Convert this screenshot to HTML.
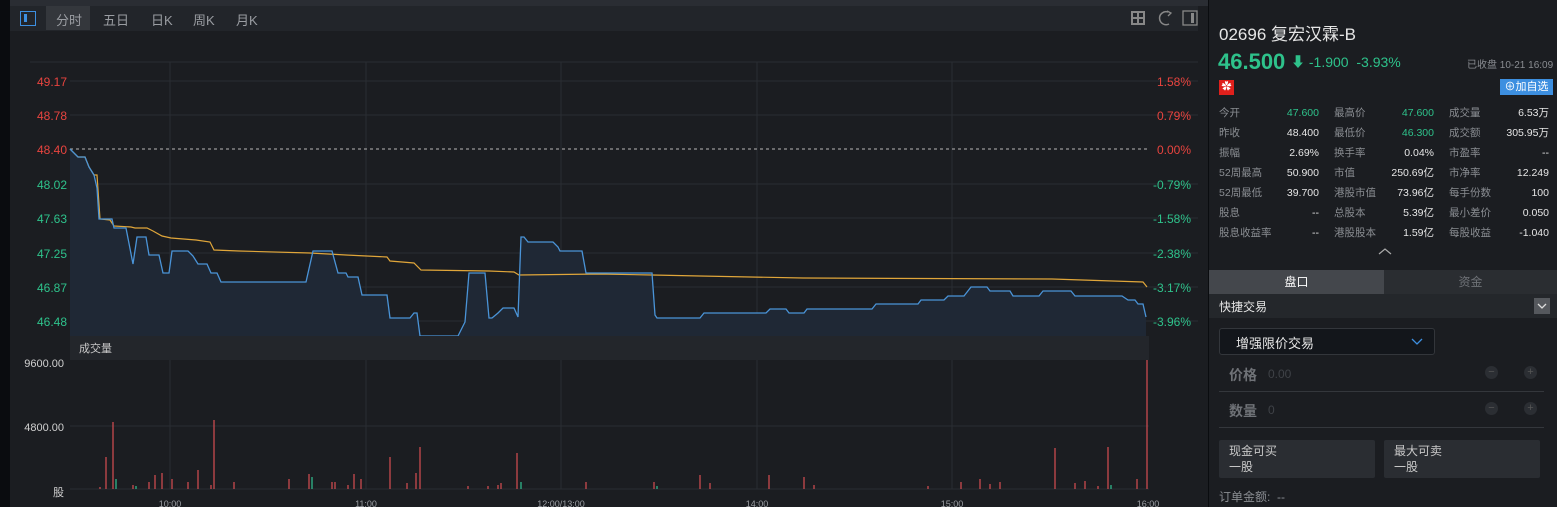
<!DOCTYPE html>
<html><head><meta charset="utf-8"><style>
*{margin:0;padding:0;box-sizing:border-box}
body{width:1557px;height:507px;background:#1b1d21;position:relative;overflow:hidden;font-family:"Liberation Sans","Noto Sans CJK SC",sans-serif;color:#ccc}
.a{position:absolute;white-space:nowrap}
.g{color:#2ec28b}.r{color:#e8443f}
.lab{color:#8a8d92;font-size:10.5px}
.val{color:#e6e6e6;font-size:10.5px;text-align:right;width:80px}
</style></head><body>
<div class="a" style="left:0;top:0;width:1208px;height:6px;background:#2a2d33"></div>
<div class="a" style="left:0;top:0;width:10px;height:507px;background:#0a0c0f"></div>
<div class="a" style="left:10px;top:6px;width:1188px;height:25px;background:#22252a"></div>
<div class="a" style="left:1208px;top:0;width:1px;height:507px;background:#0a0c0f"></div>
<!-- toolbar -->
<div class="a" style="left:20px;top:11px;width:16px;height:15px;border:1.5px solid #3d8fe0"><div style="position:absolute;left:3px;top:2px;width:3px;height:8px;background:#3d8fe0"></div></div>
<div class="a" style="left:46px;top:6px;width:44px;height:24px;background:#34373c"></div>
<div class="a" style="left:56px;top:10px;font-size:13px;color:#9a9da2">分时</div>
<div class="a" style="left:103px;top:10px;font-size:13px;color:#9a9da2">五日</div>
<div class="a" style="left:151px;top:10px;font-size:13px;color:#9a9da2">日K</div>
<div class="a" style="left:193px;top:10px;font-size:13px;color:#9a9da2">周K</div>
<div class="a" style="left:236px;top:10px;font-size:13px;color:#9a9da2">月K</div>
<svg class="a" style="left:1128px;top:9px" width="80" height="18">
<rect x="3" y="2" width="14" height="14" fill="#888"/><rect x="5" y="4" width="4" height="4" fill="#22252a"/><rect x="11" y="4" width="4" height="4" fill="#22252a"/><rect x="5" y="10" width="4" height="4" fill="#22252a"/><rect x="11" y="10" width="4" height="4" fill="#22252a"/>
<path d="M40 3 A6.5 6.5 0 1 0 41 15" fill="none" stroke="#888" stroke-width="1.5"/><path d="M39 2 L43 4 L40 7" fill="none" stroke="#888" stroke-width="1.3"/>
<rect x="55" y="2" width="14" height="14" fill="none" stroke="#888" stroke-width="1.3"/><rect x="63" y="4" width="3" height="10" fill="#888"/>
</svg>
<!-- chart -->
<svg class="a" style="left:0;top:0" width="1208" height="507" font-family="Liberation Sans, sans-serif" font-size="12">
<g stroke="#2a2d32" stroke-width="1">
<line x1="30" y1="62" x2="1198" y2="62"/>
<line x1="70" y1="81" x2="1198" y2="81"/><line x1="70" y1="115" x2="1198" y2="115"/><line x1="70" y1="184" x2="1198" y2="184"/><line x1="70" y1="218" x2="1198" y2="218"/><line x1="70" y1="253" x2="1198" y2="253"/><line x1="70" y1="287" x2="1198" y2="287"/><line x1="70" y1="321" x2="1198" y2="321"/>
<line x1="170" y1="62" x2="170" y2="336"/><line x1="366" y1="62" x2="366" y2="336"/><line x1="561" y1="62" x2="561" y2="336"/><line x1="757" y1="62" x2="757" y2="336"/><line x1="952" y1="62" x2="952" y2="336"/>
<line x1="70" y1="426" x2="1149" y2="426"/><line x1="70" y1="489" x2="1149" y2="489"/>
<line x1="170" y1="360" x2="170" y2="489"/><line x1="366" y1="360" x2="366" y2="489"/><line x1="561" y1="360" x2="561" y2="489"/><line x1="757" y1="360" x2="757" y2="489"/><line x1="952" y1="360" x2="952" y2="489"/>
</g>
<line x1="70" y1="149" x2="1150" y2="149" stroke="#999" stroke-width="1.3" stroke-dasharray="3,3"/>
<g text-anchor="end" fill="#e8443f"><text x="67" y="86">49.17</text><text x="67" y="120">48.78</text><text x="67" y="154">48.40</text></g>
<g text-anchor="end" fill="#2ec28b"><text x="67" y="189">48.02</text><text x="67" y="223">47.63</text><text x="67" y="258">47.25</text><text x="67" y="292">46.87</text><text x="67" y="326">46.48</text></g>
<g fill="#e8443f"><text x="1157" y="86">1.58%</text><text x="1157" y="120">0.79%</text><text x="1157" y="154">0.00%</text></g>
<g fill="#2ec28b"><text x="1153" y="189">-0.79%</text><text x="1153" y="223">-1.58%</text><text x="1153" y="258">-2.38%</text><text x="1153" y="292">-3.17%</text><text x="1153" y="326">-3.96%</text></g>
<path d="M70 149 L78 157 L85 157 L89 167 L94 175 L97 188 L99 219 L112 219 L114 228 L126 228 L133 264 L137 237 L146 237 L149 255 L159 255 L163 273 L169 273 L172 251 L188 251 L193 256 L198 264 L207 264 L211 273 L217 273 L221 282 L306 282 L313 251 L332 251 L338 273 L346 273 L348 277 L358 277 L362 295 L387 295 L390 318 L410 318 L414 313 L417 313 L420 336 L458 336 L465 322 L469 273 L485 273 L489 318 L492 318 L498 313 L503 308 L514 308 L518 317 L521 237 L524 237 L528 242 L553 242 L558 247 L560 251 L582 251 L586 273 L652 273 L655 315 L657 318 L700 318 L704 313 L766 313 L770 309 L786 309 L789 313 L804 313 L807 309 L872 309 L876 304 L918 304 L921 300 L944 300 L948 296 L964 296 L971 287 L987 287 L990 291 L1010 291 L1013 296 L1039 296 L1043 291 L1071 291 L1075 296 L1122 296 L1128 300 L1135 300 L1138 304 L1143 304 L1146 317 L1146 336 L70 336 Z" fill="#1f2835"/>
<path d="M70 149 L78 157 L85 157 L89 167 L94 175 L97 175 L100 219 L110 220 L114 226 L131 227 L135 228 L147 228 L153 231 L162 236 L171 238 L196 240 L210 242 L214 250 L239 251 L310 253 L346 255 L387 257 L390 261 L414 263 L421 270 L489 271 L514 272 L519 275 L600 274 L652 275 L700 276 L803 278 L1052 279 L1143 282 L1147 287" fill="none" stroke="#e0a63a" stroke-width="1.2"/>
<path d="M70 149 L78 157 L85 157 L89 167 L94 175 L97 188 L99 219 L112 219 L114 228 L126 228 L133 264 L137 237 L146 237 L149 255 L159 255 L163 273 L169 273 L172 251 L188 251 L193 256 L198 264 L207 264 L211 273 L217 273 L221 282 L306 282 L313 251 L332 251 L338 273 L346 273 L348 277 L358 277 L362 295 L387 295 L390 318 L410 318 L414 313 L417 313 L420 336 L458 336 L465 322 L469 273 L485 273 L489 318 L492 318 L498 313 L503 308 L514 308 L518 317 L521 237 L524 237 L528 242 L553 242 L558 247 L560 251 L582 251 L586 273 L652 273 L655 315 L657 318 L700 318 L704 313 L766 313 L770 309 L786 309 L789 313 L804 313 L807 309 L872 309 L876 304 L918 304 L921 300 L944 300 L948 296 L964 296 L971 287 L987 287 L990 291 L1010 291 L1013 296 L1039 296 L1043 291 L1071 291 L1075 296 L1122 296 L1128 300 L1135 300 L1138 304 L1143 304 L1146 317" fill="none" stroke="#4a94d8" stroke-width="1.3"/>
<rect x="70" y="336" width="1079" height="24" fill="#23262b"/>
<text x="79" y="352" fill="#c8c8c8" font-size="11" font-family="Noto Sans CJK SC, sans-serif">成交量</text>
<g text-anchor="end" fill="#d0d0d0" font-size="11"><text x="64" y="367">9600.00</text><text x="64" y="431">4800.00</text><text x="64" y="496" font-family="Noto Sans CJK SC, sans-serif">股</text></g>
<g fill="#9a9da2" font-size="9" text-anchor="middle"><text x="170" y="507">10:00</text><text x="366" y="507">11:00</text><text x="561" y="507">12:00/13:00</text><text x="757" y="507">14:00</text><text x="952" y="507">15:00</text><text x="1148" y="507">16:00</text></g>
<g stroke="#c94a4f" stroke-width="1.3">
<line x1="100" y1="489" x2="100" y2="487"/><line x1="106" y1="489" x2="106" y2="457"/><line x1="113" y1="489" x2="113" y2="422"/><line x1="133" y1="489" x2="133" y2="485"/><line x1="149" y1="489" x2="149" y2="482"/><line x1="155" y1="489" x2="155" y2="475"/><line x1="162" y1="489" x2="162" y2="473"/><line x1="172" y1="489" x2="172" y2="479"/><line x1="188" y1="489" x2="188" y2="482"/><line x1="198" y1="489" x2="198" y2="470"/><line x1="211" y1="489" x2="211" y2="485"/><line x1="214" y1="489" x2="214" y2="420"/><line x1="234" y1="489" x2="234" y2="482"/><line x1="289" y1="489" x2="289" y2="479"/><line x1="309" y1="489" x2="309" y2="474"/><line x1="332" y1="489" x2="332" y2="482"/><line x1="335" y1="489" x2="335" y2="482"/><line x1="348" y1="489" x2="348" y2="485"/><line x1="354" y1="489" x2="354" y2="474"/><line x1="361" y1="489" x2="361" y2="479"/><line x1="390" y1="489" x2="390" y2="457"/><line x1="407" y1="489" x2="407" y2="483"/><line x1="416" y1="489" x2="416" y2="473"/><line x1="420" y1="489" x2="420" y2="447"/><line x1="468" y1="489" x2="468" y2="486"/><line x1="488" y1="489" x2="488" y2="486"/><line x1="498" y1="489" x2="498" y2="485"/><line x1="501" y1="489" x2="501" y2="483"/><line x1="517" y1="489" x2="517" y2="453"/><line x1="586" y1="489" x2="586" y2="482"/>
<line x1="654" y1="489" x2="654" y2="482"/><line x1="700" y1="489" x2="700" y2="475"/><line x1="710" y1="489" x2="710" y2="483"/><line x1="769" y1="489" x2="769" y2="475"/><line x1="804" y1="489" x2="804" y2="477"/><line x1="814" y1="489" x2="814" y2="485"/><line x1="928" y1="489" x2="928" y2="486"/><line x1="961" y1="489" x2="961" y2="482"/><line x1="980" y1="489" x2="980" y2="479"/><line x1="990" y1="489" x2="990" y2="484"/><line x1="1000" y1="489" x2="1000" y2="482"/><line x1="1055" y1="489" x2="1055" y2="448"/><line x1="1075" y1="489" x2="1075" y2="483"/><line x1="1085" y1="489" x2="1085" y2="481"/><line x1="1098" y1="489" x2="1098" y2="486"/><line x1="1108" y1="489" x2="1108" y2="447"/><line x1="1137" y1="489" x2="1137" y2="479"/><line x1="1147" y1="489" x2="1147" y2="360"/>
</g>
<g stroke="#2fb58a" stroke-width="1.3"><line x1="116" y1="489" x2="116" y2="479"/><line x1="136" y1="489" x2="136" y2="486"/><line x1="312" y1="489" x2="312" y2="477"/><line x1="521" y1="489" x2="521" y2="482"/><line x1="657" y1="489" x2="657" y2="486"/><line x1="1111" y1="489" x2="1111" y2="485"/></g>
</svg>
<!-- right panel -->
<div class="a" style="left:1219px;top:20px;font-size:17px;color:#e6e6e6">02696 复宏汉霖-B</div>
<div class="a g" style="left:1218px;top:49px;font-size:22px;font-weight:bold">46.500</div>
<div class="a g" style="left:1291px;top:52px;font-size:14px">⬇ -1.900&nbsp; -3.93%</div>
<div class="a" style="left:1467px;top:56px;font-size:10px;color:#8a8d92">已收盘 10-21 16:09</div>
<div class="a" style="left:1219px;top:80px;width:15px;height:15px;background:#e0201c;color:#fff;font-size:10px;text-align:center;line-height:15px">✿</div>
<div class="a" style="left:1500px;top:79px;width:53px;height:16px;background:#3d8fe0;color:#fff;font-size:11px;line-height:16px;text-align:center">⊕加自选</div>
<div class="a lab" style="left:1219px;top:103px;line-height:20px">今开<br>昨收<br>振幅<br>52周最高<br>52周最低<br>股息<br>股息收益率</div>
<div class="a val" style="left:1239px;top:103px;line-height:20px"><span class="g">47.600</span><br>48.400<br>2.69%<br>50.900<br>39.700<br>--<br>--</div>
<div class="a lab" style="left:1334px;top:103px;line-height:20px">最高价<br>最低价<br>换手率<br>市值<br>港股市值<br>总股本<br>港股股本</div>
<div class="a val" style="left:1354px;top:103px;line-height:20px"><span class="g">47.600</span><br><span class="g">46.300</span><br>0.04%<br>250.69亿<br>73.96亿<br>5.39亿<br>1.59亿</div>
<div class="a lab" style="left:1449px;top:103px;line-height:20px">成交量<br>成交额<br>市盈率<br>市净率<br>每手份数<br>最小差价<br>每股收益</div>
<div class="a val" style="left:1469px;top:103px;line-height:20px">6.53万<br>305.95万<br>--<br>12.249<br>100<br>0.050<br>-1.040</div>
<svg class="a" style="left:1378px;top:247px" width="14" height="8"><path d="M1 7 L7 2 L13 7" fill="none" stroke="#aaa" stroke-width="1.2"/></svg>
<div class="a" style="left:1209px;top:270px;width:175px;height:24px;background:#44474c;color:#fff;font-size:12px;text-align:center;line-height:24px">盘口</div>
<div class="a" style="left:1384px;top:270px;width:173px;height:24px;background:#2a2d31;color:#6f7277;font-size:12px;text-align:center;line-height:24px">资金</div>
<div class="a" style="left:1209px;top:294px;width:348px;height:24px;background:#24272b"></div>
<div class="a" style="left:1219px;top:298px;font-size:12px;color:#e6e6e6">快捷交易</div>
<div class="a" style="left:1534px;top:298px;width:16px;height:16px;background:#55585d"><svg width="16" height="16"><path d="M4 6 L8 10 L12 6" fill="none" stroke="#ddd" stroke-width="1.3"/></svg></div>
<div class="a" style="left:1219px;top:328px;width:216px;height:27px;background:#13161b;border:1px solid #33363b;border-radius:3px"></div>
<div class="a" style="left:1236px;top:333px;font-size:13px;color:#e6e6e6">增强限价交易</div>
<svg class="a" style="left:1410px;top:336px" width="14" height="10"><path d="M2 3 L7 8 L12 3" fill="none" stroke="#3d8fe0" stroke-width="1.3"/></svg>
<div class="a" style="left:1229px;top:365px;font-size:14px;color:#6f7277;font-weight:bold">价格</div>
<div class="a" style="left:1268px;top:367px;font-size:12px;color:#3f4247">0.00</div>
<div class="a" style="left:1219px;top:391px;width:325px;height:1px;background:#34373c"></div>
<div class="a" style="left:1229px;top:401px;font-size:14px;color:#6f7277;font-weight:bold">数量</div>
<div class="a" style="left:1268px;top:403px;font-size:12px;color:#3f4247">0</div>
<div class="a" style="left:1219px;top:427px;width:325px;height:1px;background:#34373c"></div>
<div class="a" style="left:1485px;top:366px;width:13px;height:13px;border-radius:50%;background:#2b2e33;color:#555;font-size:11px;line-height:13px;text-align:center">−</div>
<div class="a" style="left:1524px;top:366px;width:13px;height:13px;border-radius:50%;background:#2b2e33;color:#555;font-size:11px;line-height:13px;text-align:center">+</div>
<div class="a" style="left:1485px;top:402px;width:13px;height:13px;border-radius:50%;background:#2b2e33;color:#555;font-size:11px;line-height:13px;text-align:center">−</div>
<div class="a" style="left:1524px;top:402px;width:13px;height:13px;border-radius:50%;background:#2b2e33;color:#555;font-size:11px;line-height:13px;text-align:center">+</div>
<div class="a" style="left:1219px;top:440px;width:156px;height:38px;background:#2a2d32;border-radius:2px;padding:3px 10px;font-size:12px;color:#c8c8c8;line-height:16px">现金可买<br>一股</div>
<div class="a" style="left:1384px;top:440px;width:156px;height:38px;background:#2a2d32;border-radius:2px;padding:3px 10px;font-size:12px;color:#c8c8c8;line-height:16px">最大可卖<br>一股</div>
<div class="a" style="left:1219px;top:488px;font-size:12px;color:#8a8d92">订单金额:&nbsp; --</div>
</body></html>
